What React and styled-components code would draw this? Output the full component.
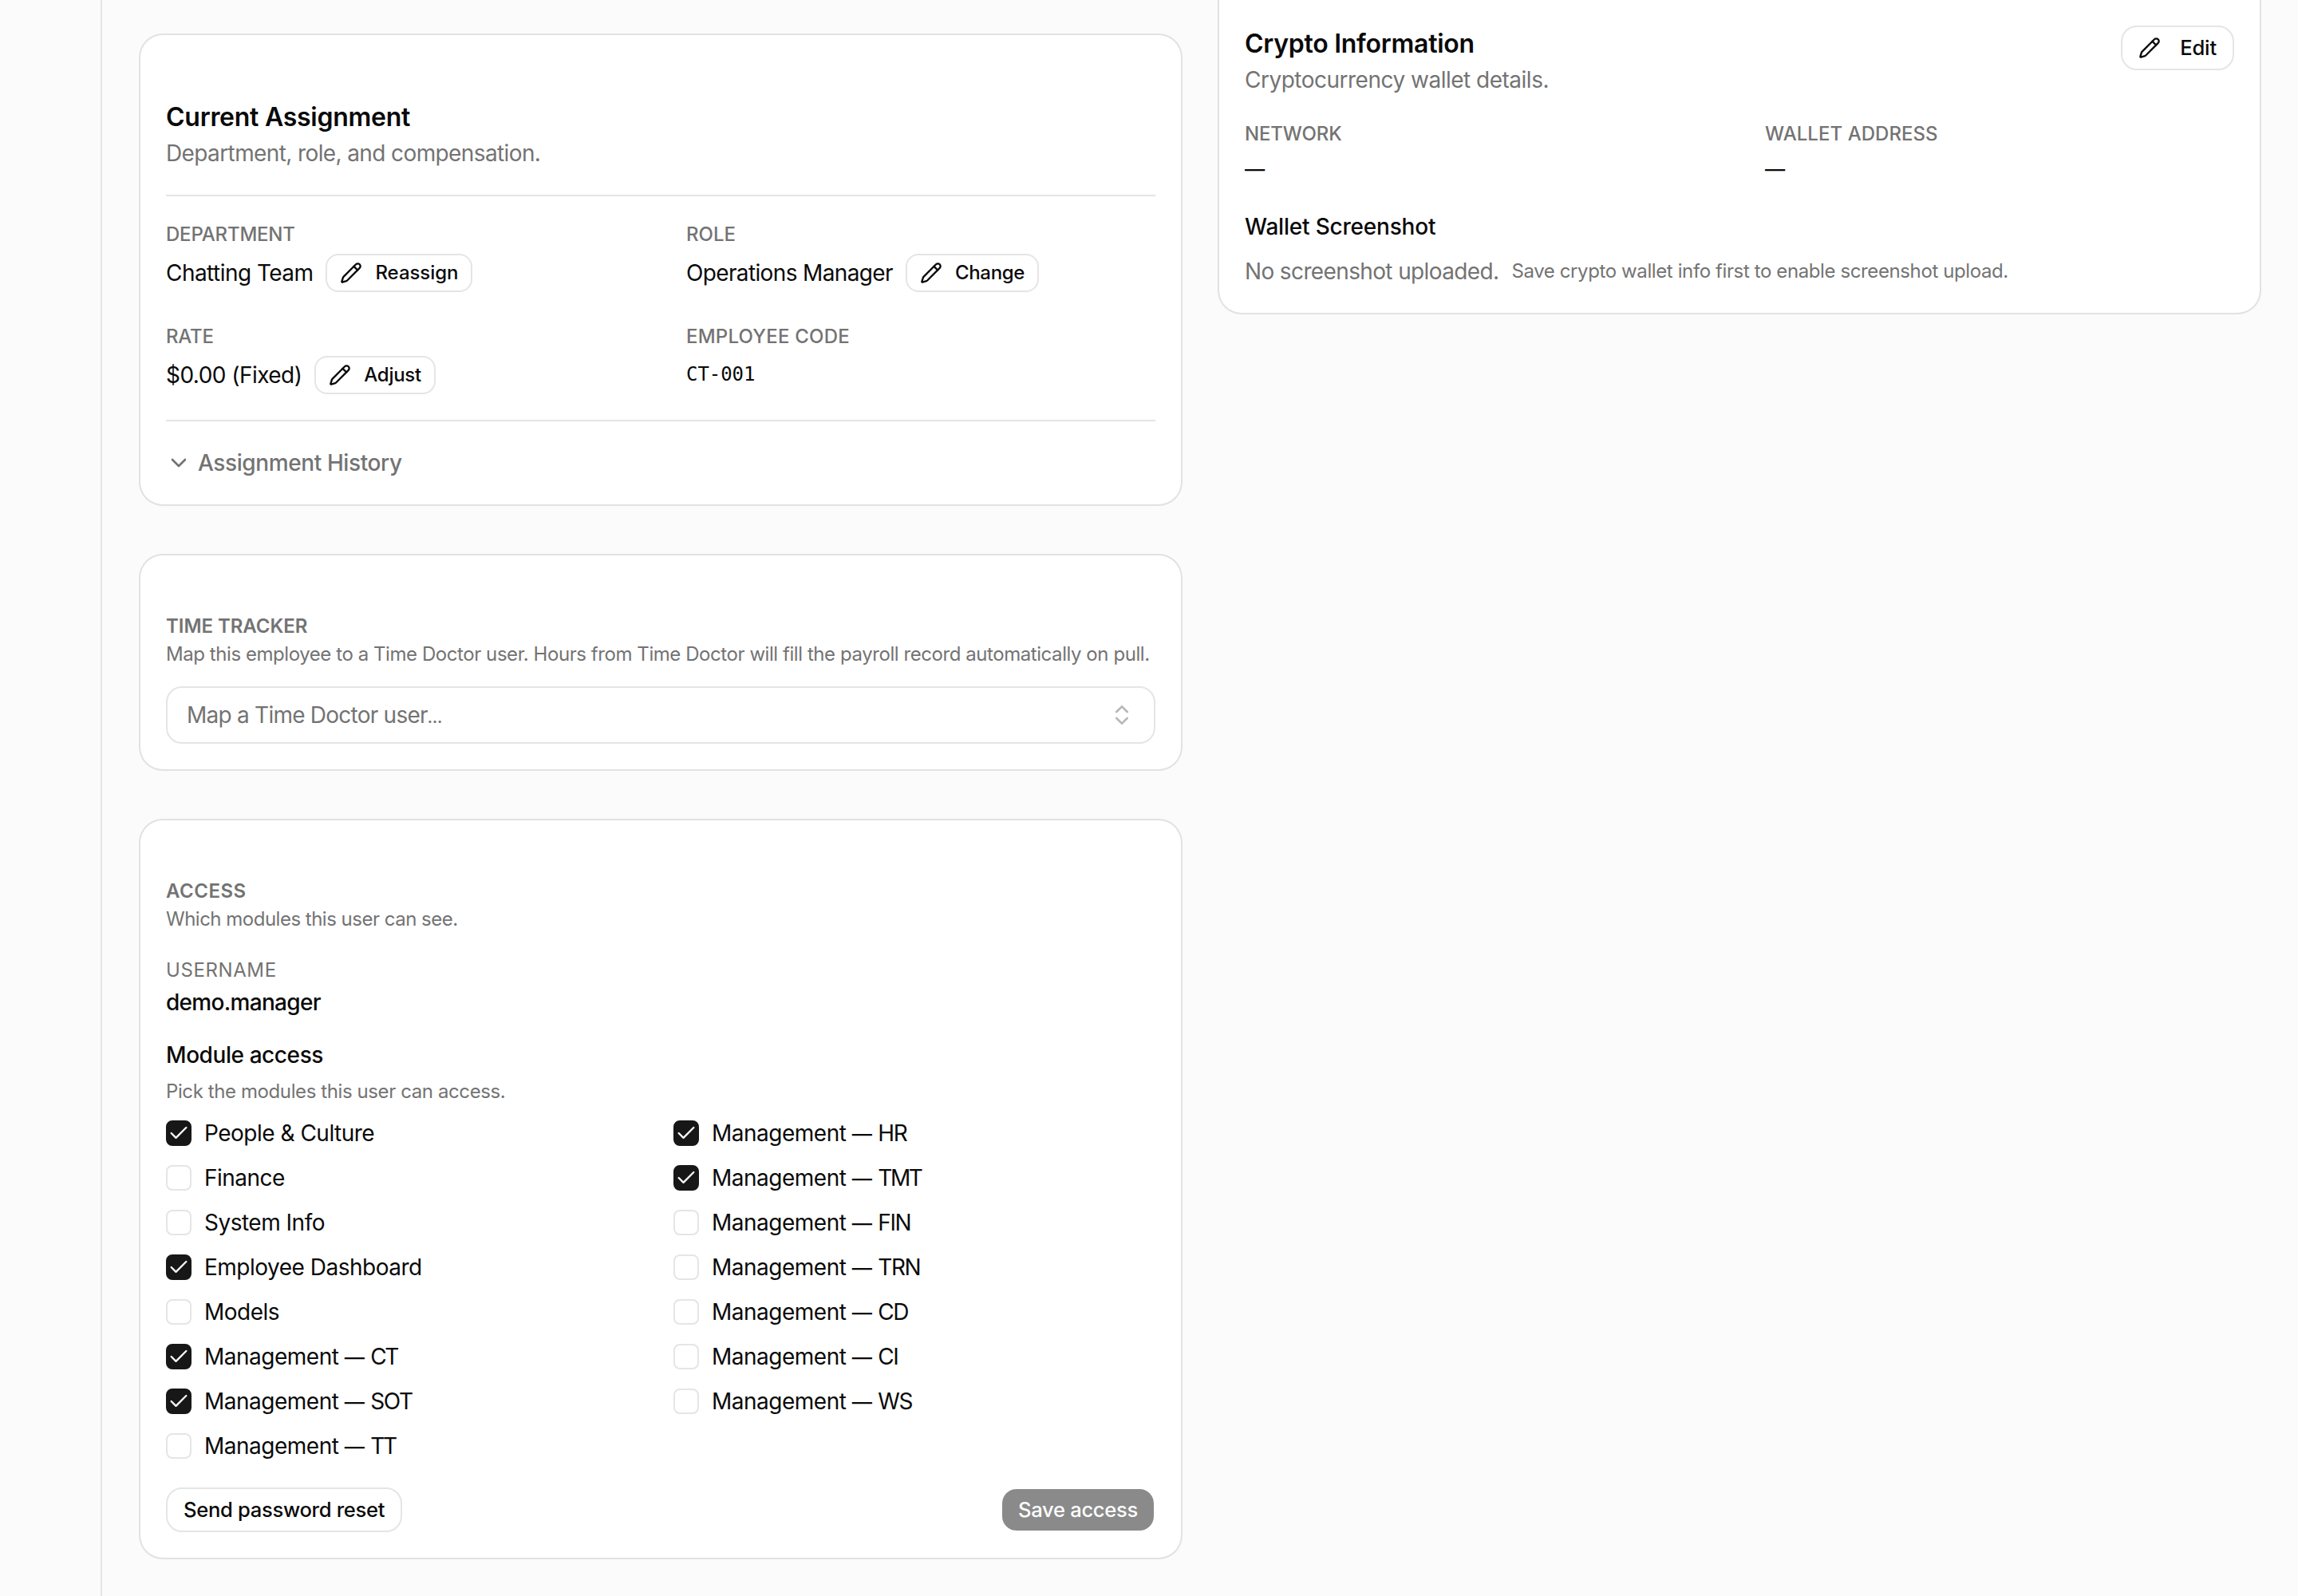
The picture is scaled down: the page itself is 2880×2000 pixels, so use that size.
import { useState } from 'react';
import styled, { createGlobalStyle, ThemeProvider } from 'styled-components';
import * as Checkbox from '@radix-ui/react-checkbox';
import { Check, ChevronDown, ChevronsUpDown, Pencil } from 'lucide-react';

const theme = {
  background: '#fbfbfb',
  card: '#ffffff',
  foreground: '#0a0a0a',
  muted: '#737373',
  primary: '#171717',
  primaryForeground: '#fafafa',
  border: '#e5e5e5',
};

const GlobalStyle = createGlobalStyle`
  *, *::before, *::after {
    box-sizing: border-box;
  }

  body {
    margin: 0;
    overflow: hidden;
    background-color: ${theme.background};
    color: ${theme.foreground};
    font-family: 'Inter', 'Liberation Sans', sans-serif;
    font-size: 28px;
    line-height: 40px;
  }

  h2, h3, p, dl, dd, dt {
    margin: 0;
    font-weight: 400;
  }
`;

const Shell = styled.div`
  display: grid;
  grid-template-columns: 128px 1fr;
  height: 2000px;
  overflow: hidden;
`;

const Sidebar = styled.aside`
  border-right: 2px solid ${({ theme }) => theme.border};
`;

const Main = styled.main`
  display: grid;
  grid-template-columns: repeat(2, minmax(0, 1fr));
  align-items: start;
  gap: 48px;
  padding: 44px 48px 0;
`;

const Column = styled.div`
  display: flex;
  flex-direction: column;
  gap: 64px;
  margin-top: ${({ $scrolled }) => ($scrolled ? '-92px' : 0)};
`;

const Card = styled.section`
  display: flex;
  flex-direction: column;
  gap: ${({ $gap }) => $gap || 32}px;
  padding: ${({ $compact }) => ($compact ? 72 : 80)}px 32px 32px;
  border-radius: 28px;
  background-color: ${({ theme }) => theme.card};
  box-shadow: 0 0 0 2px rgba(10, 10, 10, 0.1);
`;

const CardHeader = styled.header`
  display: flex;
  align-items: flex-start;
  justify-content: space-between;
`;

const HeaderText = styled.div`
  display: flex;
  flex-direction: column;
  gap: 4px;
`;

const CardTitle = styled.h2`
  height: 44px;
  font-size: 32px;
  font-weight: 600;
  line-height: 46px;
  letter-spacing: -0.27px;
`;

const CardDescription = styled.p`
  height: 40px;
  color: ${({ theme }) => theme.muted};
  line-height: 41px;
  letter-spacing: ${({ $track }) => $track || -0.58}px;
`;

const SectionTitle = styled.h3`
  height: 32px;
  color: ${({ theme }) => theme.muted};
  font-size: 24px;
  font-weight: 600;
  line-height: 33px;
  letter-spacing: ${({ $track }) => $track || 0}px;
  text-transform: uppercase;
`;

const Hint = styled.p`
  color: ${({ theme }) => theme.muted};
  font-size: 24px;
  line-height: 32px;
  letter-spacing: ${({ $track }) => $track || -0.4}px;
  white-space: nowrap;
`;

const Separator = styled.div`
  height: 2px;
  background-color: ${({ theme }) => theme.border};
`;

const Fields = styled.dl`
  display: grid;
  grid-template-columns: repeat(2, minmax(0, 1fr));
  gap: 40px 64px;
`;

const Field = styled.div`
  display: flex;
  flex-direction: column;
  gap: ${({ $tight }) => ($tight ? 4 : 8)}px;
`;

const FieldLabel = styled.dt`
  height: 32px;
  color: ${({ theme }) => theme.muted};
  font-size: 24px;
  font-weight: ${({ $weight }) => $weight || 500};
  line-height: 32px;
  letter-spacing: ${({ $track }) => $track || 0}px;
  text-transform: uppercase;
`;

const FieldValue = styled.dd`
  display: flex;
  align-items: center;
  gap: 16px;
  font-weight: ${({ $strong }) => ($strong ? 500 : 400)};
  letter-spacing: ${({ $track }) => $track || -0.5}px;
`;

const Code = styled.dd`
  padding-top: 3px;
  font-family: 'DejaVu Sans Mono', 'Liberation Mono', monospace;
  font-size: 24px;
  letter-spacing: -0.05px;
`;

const Dash = styled.span`
  font-size: 0.9em;
  font-weight: 500;
  letter-spacing: 0;
`;

const ModuleCode = styled.span`
  letter-spacing: ${({ $narrow }) => ($narrow ? -2.4 : -1.4)}px;
`;

const Ellipsis = styled.span`
  font-size: 0.66em;
  font-weight: 700;
  letter-spacing: 0;
`;

const Button = styled.button`
  display: inline-flex;
  align-items: center;
  justify-content: center;
  flex: 0 0 auto;
  height: 56px;
  padding: 0 20px;
  border: 2px solid ${({ theme }) => theme.border};
  border-radius: 20px;
  background-color: ${({ theme }) => theme.card};
  background-clip: padding-box;
  color: inherit;
  font-family: inherit;
  font-size: 25.6px;
  font-weight: 500;
  line-height: 36px;
  letter-spacing: ${({ $track }) => $track || -0.31}px;
  white-space: nowrap;
  cursor: pointer;

  & > svg {
    margin-right: 24px;
  }
`;

const SmallButton = styled(Button)`
  height: 48px;
  padding: 0 16px;
  border-radius: 16px;
  font-size: 24px;
  line-height: 32px;

  & > svg {
    margin-right: 16px;
  }
`;

const PrimaryButton = styled(Button)`
  border-color: transparent;
  background-color: ${({ theme }) => theme.primary};
  color: ${({ theme }) => theme.primaryForeground};

  &:disabled {
    opacity: 0.5;
    cursor: default;
  }
`;

const HistoryToggle = styled.button`
  display: flex;
  align-items: center;
  align-self: flex-start;
  gap: 8px;
  height: 40px;
  padding: 0;
  border: 0;
  background: transparent;
  color: ${({ theme }) => theme.muted};
  font: inherit;
  font-weight: 500;
  letter-spacing: -0.4px;
  cursor: pointer;
`;

const SelectTrigger = styled.button`
  display: flex;
  align-items: center;
  justify-content: space-between;
  height: 72px;
  padding: 0 24px;
  border: 2px solid ${({ theme }) => theme.border};
  border-radius: 20px;
  background: transparent;
  color: ${({ theme }) => theme.muted};
  font: inherit;
  letter-spacing: -0.76px;
  cursor: pointer;

  & > svg {
    opacity: 0.5;
  }
`;

const Placeholder = styled.span`
  padding-top: 2px;
`;

const Screenshot = styled.div`
  display: flex;
  flex-direction: column;
  gap: 16px;
`;

const ScreenshotRow = styled.div`
  display: flex;
  align-items: center;
  gap: 16px;
`;

const SubTitle = styled.h3`
  font-size: 28px;
  font-weight: 500;
  line-height: ${({ $snug }) => ($snug ? 28 : 40)}px;
  letter-spacing: ${({ $track }) => $track}px;
`;

const ModuleSection = styled.div`
  display: flex;
  flex-direction: column;
  gap: 16px;
`;

const ModuleGrid = styled.div`
  display: grid;
  grid-template-columns: repeat(2, minmax(0, 1fr));
  grid-template-rows: repeat(8, 40px);
  grid-auto-flow: column;
  gap: 16px 32px;
`;

const ModuleItem = styled.label`
  display: flex;
  align-items: center;
  gap: 16px;
  letter-spacing: -0.5px;
`;

const Box = styled(Checkbox.Root)`
  display: flex;
  align-items: center;
  justify-content: center;
  width: 32px;
  height: 32px;
  padding: 0;
  border: 2px solid ${({ theme }) => theme.border};
  border-radius: 8px;
  background-color: ${({ theme }) => theme.card};
  color: ${({ theme }) => theme.primaryForeground};

  &[data-state='checked'] {
    border-color: ${({ theme }) => theme.primary};
    background-color: ${({ theme }) => theme.primary};
  }
`;

const Indicator = styled(Checkbox.Indicator)`
  display: grid;
  place-content: center;
`;

const CardFooter = styled.footer`
  display: flex;
  align-items: center;
  justify-content: space-between;
`;

const modules = [
  { name: 'People & Culture', checked: true },
  { name: 'Finance' },
  { name: 'System Info' },
  { name: 'Employee Dashboard', checked: true },
  { name: 'Models' },
  { name: 'Management', code: 'CT', narrow: true, checked: true },
  { name: 'Management', code: 'SOT', checked: true },
  { name: 'Management', code: 'TT', narrow: true },
  { name: 'Management', code: 'HR', checked: true },
  { name: 'Management', code: 'TMT', narrow: true, checked: true },
  { name: 'Management', code: 'FIN' },
  { name: 'Management', code: 'TRN' },
  { name: 'Management', code: 'CD' },
  { name: 'Management', code: 'CI' },
  { name: 'Management', code: 'WS' },
];

const AssignmentCard = () => (
  <Card>
    <HeaderText>
      <CardTitle>Current Assignment</CardTitle>
      <CardDescription $track={-0.61}>
        Department, role, and compensation.
      </CardDescription>
    </HeaderText>
    <Separator />
    <Fields>
      <Field>
        <FieldLabel $track={-0.2}>Department</FieldLabel>
        <FieldValue $track={-0.54}>
          Chatting Team
          <SmallButton $track={-0.07}>
            <Pencil size={28} />
            Reassign
          </SmallButton>
        </FieldValue>
      </Field>
      <Field>
        <FieldLabel>Role</FieldLabel>
        <FieldValue $track={-0.64}>
          Operations Manager
          <SmallButton $track={-0.3}>
            <Pencil size={28} />
            Change
          </SmallButton>
        </FieldValue>
      </Field>
      <Field>
        <FieldLabel $track={-0.2}>Rate</FieldLabel>
        <FieldValue $track={-0.54}>
          $0.00 (Fixed)
          <SmallButton $track={-0.3}>
            <Pencil size={28} />
            Adjust
          </SmallButton>
        </FieldValue>
      </Field>
      <Field>
        <FieldLabel $track={0.22}>Employee Code</FieldLabel>
        <Code>CT-001</Code>
      </Field>
    </Fields>
    <Separator />
    <HistoryToggle>
      <ChevronDown size={32} />
      Assignment History
    </HistoryToggle>
  </Card>
);

const TimeTrackerCard = () => (
  <Card $compact $gap={24}>
    <HeaderText>
      <SectionTitle $track={-0.05}>Time Tracker</SectionTitle>
      <Hint $track={-0.435}>
        Map this employee to a Time Doctor user. Hours from Time Doctor will
        fill the payroll record automatically on pull.
      </Hint>
    </HeaderText>
    <SelectTrigger>
      <Placeholder>
        Map a Time Doctor user<Ellipsis>…</Ellipsis>
      </Placeholder>
      <ChevronsUpDown size={32} />
    </SelectTrigger>
  </Card>
);

const AccessCard = () => {
  const [selected, setSelected] = useState(() =>
    modules.map(({ checked }) => Boolean(checked))
  );

  const toggle = (index) =>
    setSelected((prev) => prev.map((on, i) => (i === index ? !on : on)));

  return (
    <Card $compact>
      <HeaderText>
        <SectionTitle $track={0.5}>Access</SectionTitle>
        <Hint $track={-0.5}>Which modules this user can see.</Hint>
      </HeaderText>
      <Field as="dl" $tight>
        <FieldLabel $weight={400} $track={0.6}>
          Username
        </FieldLabel>
        <FieldValue $strong $track={-0.7}>
          demo.manager
        </FieldValue>
      </Field>
      <ModuleSection>
        <SubTitle $snug $track={-0.42}>
          Module access
        </SubTitle>
        <Hint>Pick the modules this user can access.</Hint>
        <ModuleGrid>
          {modules.map(({ name, code, narrow }, i) => (
            <ModuleItem key={code || name}>
              <Box
                checked={selected[i]}
                onCheckedChange={() => toggle(i)}
              >
                <Indicator>
                  <Check size={28} />
                </Indicator>
              </Box>
              {code ? (
                <span>
                  {name} <Dash>—</Dash>{' '}
                  <ModuleCode $narrow={narrow}>{code}</ModuleCode>
                </span>
              ) : (
                name
              )}
            </ModuleItem>
          ))}
        </ModuleGrid>
      </ModuleSection>
      <CardFooter>
        <Button>Send password reset</Button>
        <PrimaryButton disabled>Save access</PrimaryButton>
      </CardFooter>
    </Card>
  );
};

const CryptoCard = () => (
  <Card>
    <CardHeader>
      <HeaderText>
        <CardTitle>Crypto Information</CardTitle>
        <CardDescription $track={-0.5}>
          Cryptocurrency wallet details.
        </CardDescription>
      </HeaderText>
      <Button $track={-0.14}>
        <Pencil size={28} />
        Edit
      </Button>
    </CardHeader>
    <Fields>
      <Field>
        <FieldLabel $track={-0.15}>Network</FieldLabel>
        <FieldValue>
          <Dash>—</Dash>
        </FieldValue>
      </Field>
      <Field>
        <FieldLabel $track={0.05}>Wallet Address</FieldLabel>
        <FieldValue>
          <Dash>—</Dash>
        </FieldValue>
      </Field>
    </Fields>
    <Screenshot>
      <SubTitle $track={-0.2}>Wallet Screenshot</SubTitle>
      <ScreenshotRow>
        <CardDescription $track={-0.63}>No screenshot uploaded.</CardDescription>
        <Hint $track={-0.39}>
          Save crypto wallet info first to enable screenshot upload.
        </Hint>
      </ScreenshotRow>
    </Screenshot>
  </Card>
);

const App = () => (
  <ThemeProvider theme={theme}>
    <GlobalStyle />
    <Shell>
      <Sidebar />
      <Main>
        <Column>
          <AssignmentCard />
          <TimeTrackerCard />
          <AccessCard />
        </Column>
        <Column $scrolled>
          <CryptoCard />
        </Column>
      </Main>
    </Shell>
  </ThemeProvider>
);

export default App;
